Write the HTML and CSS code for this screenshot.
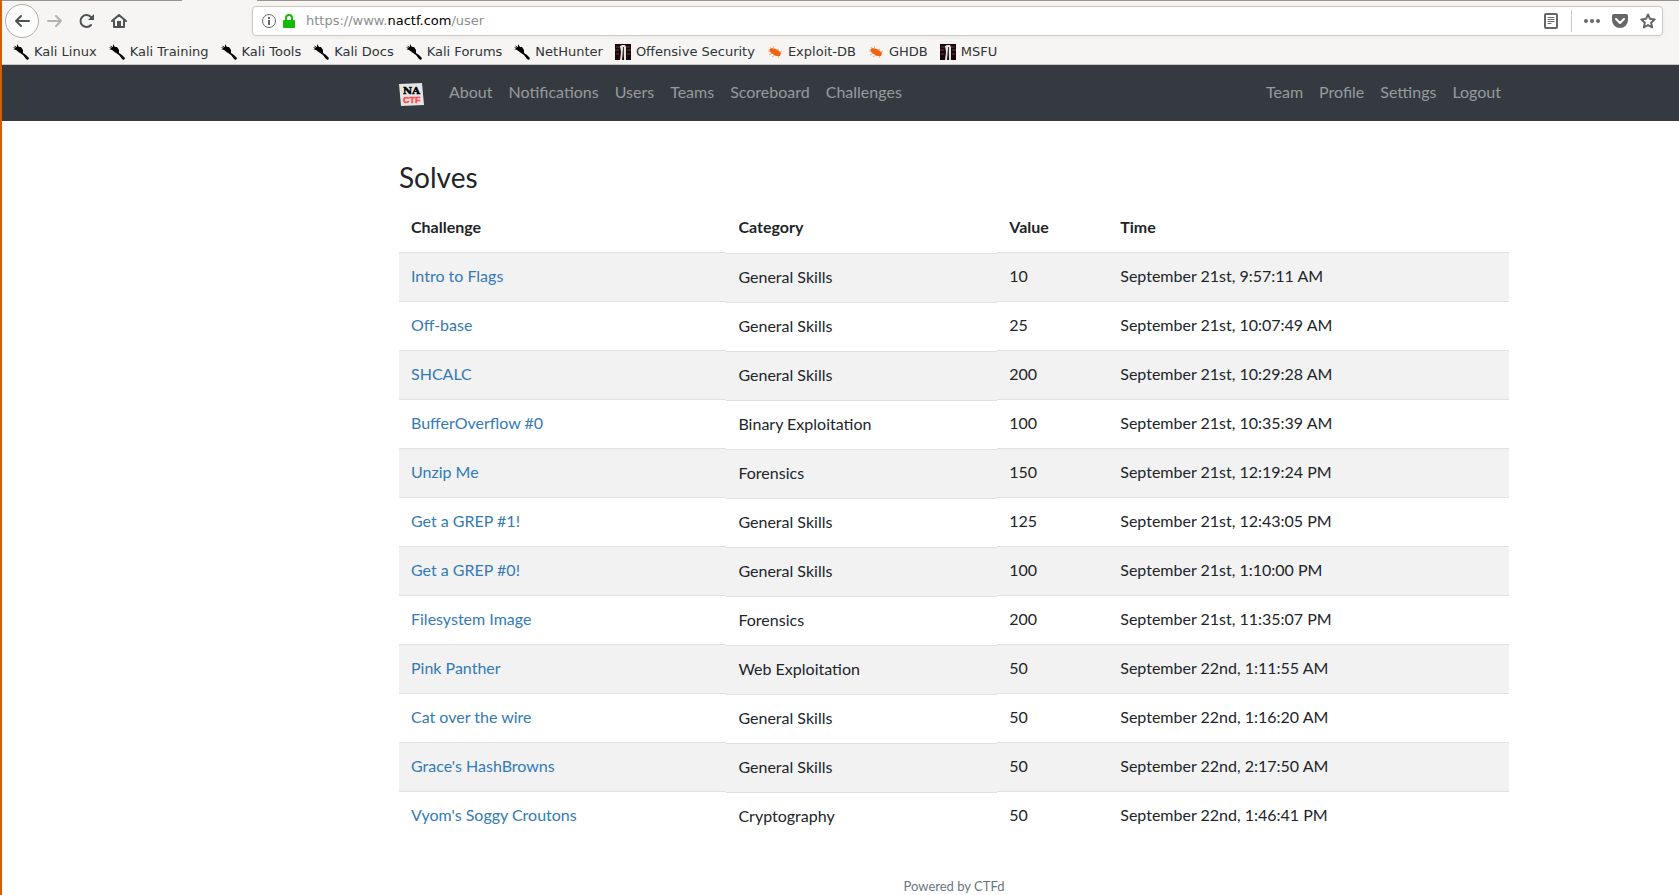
FILE: index.html
```html
<!DOCTYPE html>
<html lang="en">
<head>
<meta charset="utf-8">
<title>NACTF</title>
<link rel="stylesheet" href="styles.css">
</head>
<body>
<svg class="defs" aria-hidden="true">
  <symbol id="kali" viewBox="0 0 16 16"><path d="M0 3 3 4 1 1.500 4 3 4 0 6 3 8 3 10 6 10 9 13 11 16 14 15 16 13 15 10 11 7 9 3 6 0 5 2 5Z"/></symbol>
  <symbol id="offsec" viewBox="0 0 16 16"><path d="M0 0h16v16H0z" fill="#1c0508"/><path d="M1 3h4M11 3h4M0 6h4M12 6h4M1 10h3M12 10h3" stroke="#5a4547"/><path d="M5 2l2-1h3l1 2v13H9V5H8L7 16H5l1-8z" fill="#e4e4de"/><path d="M8 3h1v10H8z" fill="#333"/></symbol>
  <symbol id="bug" viewBox="0 0 16 16"><path d="M2 6 4 4 7 4.500 11 6 14 9 13 12 9 12 4 9Z" fill="#f0620f"/><path d="M4 5 3 3M7 5 6 2M10 6 12 5M13 8l2-1M5 9 2 11M8 11 5 13M11 12 12 14M3 7H1" stroke="#f7a877" fill="none"/></symbol>
</svg>
<header class="browser">
  <div class="tab-edge"></div>
  <div class="toolbar">
    <div class="tools">
      <button class="back" aria-label="Back"><svg class="icon" viewBox="0 0 16 16"><path d="M15 8H2M7 3 2 8l5 5"/></svg></button>
      <button class="forward" aria-label="Forward"><svg class="icon" viewBox="0 0 16 16"><path d="M1 8h13M9 3l5 5-5 5"/></svg></button>
      <button aria-label="Reload"><svg class="icon" viewBox="0 0 16 16"><path d="M12 12A6 6 0 1 1 12 4l2 2"/><path class="solid" d="M15 1v6H9z"/></svg></button>
      <button aria-label="Home"><svg class="icon" viewBox="0 0 16 16"><path d="M1 8 8 2l7 6M3 8v6h10V8"/><path class="solid" d="M6 8h4v6H6z"/></svg></button>
    </div>
    <div class="urlbar">
      <svg class="info" viewBox="0 0 16 16"><circle cx="8" cy="8" r="6.500"/><path class="stem" d="M8 7v5M8 4v2"/></svg>
      <svg class="lock" viewBox="0 0 14 16"><path d="M1 8q0-1 1-1h10q1 0 1 1v6q0 1-1 1H2q-1 0-1-1z" fill="#12bc00"/><path d="M4 8V5a3 3 0 0 1 6 0V8" fill="none" stroke="#12bc00" stroke-width="2"/></svg>
      <div class="url">https://www.<b>nactf.com</b>/user</div>
      <button aria-label="Reader view"><svg class="icon" viewBox="0 0 16 16"><rect x="2" y="1" width="12" height="14" rx="1"/><path class="thin" d="M5 4.500h6M5 6.500h6M5 8.500h6M5 10.500h3"/></svg></button>
      <span class="sep"></span>
      <button aria-label="Page actions"><svg class="icon" viewBox="0 0 16 16"><g class="solid"><circle cx="2" cy="8" r="2"/><circle cx="8" cy="8" r="2"/><circle cx="14" cy="8" r="2"/></g></svg></button>
      <button aria-label="Save to Pocket"><svg class="icon" viewBox="0 0 16 16"><path class="solid" d="M2 1h12q2 0 2 2v4a8 8 0 0 1-16 0V3q0-2 2-2z"/><path d="M4 6l4 4 4-4" class="check"/></svg></button>
      <button aria-label="Bookmark"><svg class="icon" viewBox="0 0 16 16"><path d="M8 1.500l2 4.300 4.700.6-3.500 3.200.9 4.800L8 12l-4.100 2.400.9-4.800L1.300 6.400 6 5.800z"/></svg></button>
    </div>
  </div>
  <nav class="bookmarks" aria-label="Bookmarks">
    <a href="#"><svg><use href="#kali"/></svg>Kali Linux</a>
    <a href="#"><svg><use href="#kali"/></svg>Kali Training</a>
    <a href="#"><svg><use href="#kali"/></svg>Kali Tools</a>
    <a href="#"><svg><use href="#kali"/></svg>Kali Docs</a>
    <a href="#"><svg><use href="#kali"/></svg>Kali Forums</a>
    <a href="#"><svg><use href="#kali"/></svg>NetHunter</a>
    <a href="#"><svg><use href="#offsec"/></svg>Offensive Security</a>
    <a href="#"><svg><use href="#bug"/></svg>Exploit-DB</a>
    <a href="#"><svg><use href="#bug"/></svg>GHDB</a>
    <a href="#"><svg><use href="#offsec"/></svg>MSFU</a>
  </nav>
</header>
<nav class="navbar" aria-label="Main">
  <a class="brand" href="#" aria-label="NACTF"><svg viewBox="0 0 25 25"><path d="M0 1 23 0 25 22 2 23Z" fill="#e4e4e4"/><text x="4" y="11">NA</text><text class="red" x="4" y="20">CTF</text></svg></a>
  <div class="links">
    <a href="#">About</a><a href="#">Notifications</a><a href="#">Users</a><a href="#">Teams</a><a href="#">Scoreboard</a><a href="#">Challenges</a>
  </div>
  <div class="links account">
    <a href="#">Team</a><a href="#">Profile</a><a href="#">Settings</a><a href="#">Logout</a>
  </div>
</nav>
<main>
  <h3>Solves</h3>
  <table>
    <colgroup><col class="c-challenge"><col class="c-category"><col class="c-value"><col></colgroup>
    <thead><tr><th>Challenge</th><th class="category">Category</th><th>Value</th><th>Time</th></tr></thead>
    <tbody>
      <tr><td><a href="#">Intro to Flags</a></td><td class="category">General Skills</td><td>10</td><td>September 21st, 9:57:11 AM</td></tr>
      <tr><td><a href="#">Off-base</a></td><td class="category">General Skills</td><td>25</td><td>September 21st, 10:07:49 AM</td></tr>
      <tr><td><a href="#">SHCALC</a></td><td class="category">General Skills</td><td>200</td><td>September 21st, 10:29:28 AM</td></tr>
      <tr><td><a href="#">BufferOverflow #0</a></td><td class="category">Binary Exploitation</td><td>100</td><td>September 21st, 10:35:39 AM</td></tr>
      <tr><td><a href="#">Unzip Me</a></td><td class="category">Forensics</td><td>150</td><td>September 21st, 12:19:24 PM</td></tr>
      <tr><td><a href="#">Get a GREP #1!</a></td><td class="category">General Skills</td><td>125</td><td>September 21st, 12:43:05 PM</td></tr>
      <tr><td><a href="#">Get a GREP #0!</a></td><td class="category">General Skills</td><td>100</td><td>September 21st, 1:10:00 PM</td></tr>
      <tr><td><a href="#">Filesystem Image</a></td><td class="category">Forensics</td><td>200</td><td>September 21st, 11:35:07 PM</td></tr>
      <tr><td><a href="#">Pink Panther</a></td><td class="category">Web Exploitation</td><td>50</td><td>September 22nd, 1:11:55 AM</td></tr>
      <tr><td><a href="#">Cat over the wire</a></td><td class="category">General Skills</td><td>50</td><td>September 22nd, 1:16:20 AM</td></tr>
      <tr><td><a href="#">Grace's HashBrowns</a></td><td class="category">General Skills</td><td>50</td><td>September 22nd, 2:17:50 AM</td></tr>
      <tr><td><a href="#">Vyom's Soggy Croutons</a></td><td class="category">Cryptography</td><td>50</td><td>September 22nd, 1:46:41 PM</td></tr>
    </tbody>
  </table>
</main>
<footer><a href="#">Powered by CTFd</a></footer>
</body>
</html>
```
FILE: styles.css
```css
* { box-sizing: border-box; }
html { overflow: hidden; }
body {
  margin: 0;
  border-left: 2px solid #d35f00;
  min-height: 100vh;
  background: #fff;
  color: #212529;
  font: 16px/24px Lato, sans-serif;
}
a { color: inherit; text-decoration: none; }
button { border: 0; padding: 0; background: none; display: flex; align-items: center; justify-content: center; }
.defs { display: none; }

.browser {
  background: #f6f5f4;
  border-bottom: 1px solid #cdc7c2;
  color: #2e3436;
}
.tab-edge {
  height: 1px;
  background: linear-gradient(to right, #999492 180px, #f6f5f4 180px, #f6f5f4 255px, #999492 255px);
}
.toolbar { display: flex; align-items: center; padding: 3px 16px 3px 3px; }
.tools { display: flex; align-items: center; width: 247px; }
.tools button { width: 32px; height: 34px; }
.tools .back { width: 34px; border: 1px solid #b0aeac; border-radius: 50%; background: #fcfcfc; }
.tools .forward { opacity: .4; }
.icon { width: 16px; height: 16px; fill: none; stroke: #4d5254; stroke-width: 2; stroke-linecap: round; stroke-linejoin: round; }
.icon .solid { fill: #4d5254; stroke: none; }
.icon .thin { stroke-width: 1; }
.urlbar {
  flex: 1;
  display: flex;
  align-items: center;
  height: 30px;
  padding: 0 6px 0 8px;
  background: #fff;
  border: 1px solid #cdc7c2;
  border-radius: 4px;
  box-shadow: 0 1px 4px #0000000d;
}
.urlbar .icon { stroke: #666; }
.urlbar .icon .solid { fill: #666; }
.urlbar .icon .check { stroke: #fff; }
.urlbar button { width: 28px; height: 28px; }
.urlbar button:last-child { width: 16px; margin-left: 6px; }
.info { width: 16px; height: 16px; fill: none; stroke: #666; }
.info .stem { stroke-width: 2; }
.lock { width: 14px; height: 16px; margin: 0 10px 0 5px; }
.url { flex: 1; font: 13px/28px "DejaVu Sans", sans-serif; color: #8b8e8f; }
.url b { font-weight: 400; color: #000; }
.sep { width: 1px; height: 22px; margin: 0 6px; background: #cdc7c2; }
.bookmarks {
  display: flex;
  gap: 12px;
  padding: 0 11px 1px;
  font: 13px/22px "DejaVu Sans", sans-serif;
}
.bookmarks a { display: flex; align-items: center; gap: 5px; white-space: nowrap; }
.bookmarks svg { width: 16px; height: 16px; }

.navbar {
  display: flex;
  align-items: center;
  height: 56px;
  padding: 0 170px 0 397px;
  background: #343a40;
  color: #989b9e;
}
.brand { display: flex; margin-right: 17px; padding-top: 4px; }
.brand svg { width: 25px; height: 25px; }
.brand text { font: 700 10px "DejaVu Serif", serif; fill: #000; stroke: #000; stroke-width: 0.5px; }
.brand .red { font: 700 9px "Liberation Sans", sans-serif; fill: #ff4b4b; stroke: #ff4b4b; }
.links { display: flex; }
.links a { padding: 0 8px 2px; }
.account { margin-left: auto; }

main { padding: 39px 170px 0 397px; }
h3 { margin: 0 0 10px; font-size: 28px; line-height: 34px; font-weight: 400; }
table { width: 100%; border-collapse: collapse; table-layout: fixed; }
.c-challenge { width: 29.5%; }
.c-category { width: 24.4%; }
.c-value { width: 10%; }
th, td { padding: 11px 12px 13px; text-align: left; vertical-align: top; border-top: 1px solid #dee2e6; }
thead th { border-top: 0; }
.category { display: block; }
td a { color: #337ab7; }
tbody tr:nth-child(odd) { background: #f2f2f2; }
footer { padding: 33px 170px 0 397px; text-align: center; font-size: 13px; color: #6c757d; }
```
